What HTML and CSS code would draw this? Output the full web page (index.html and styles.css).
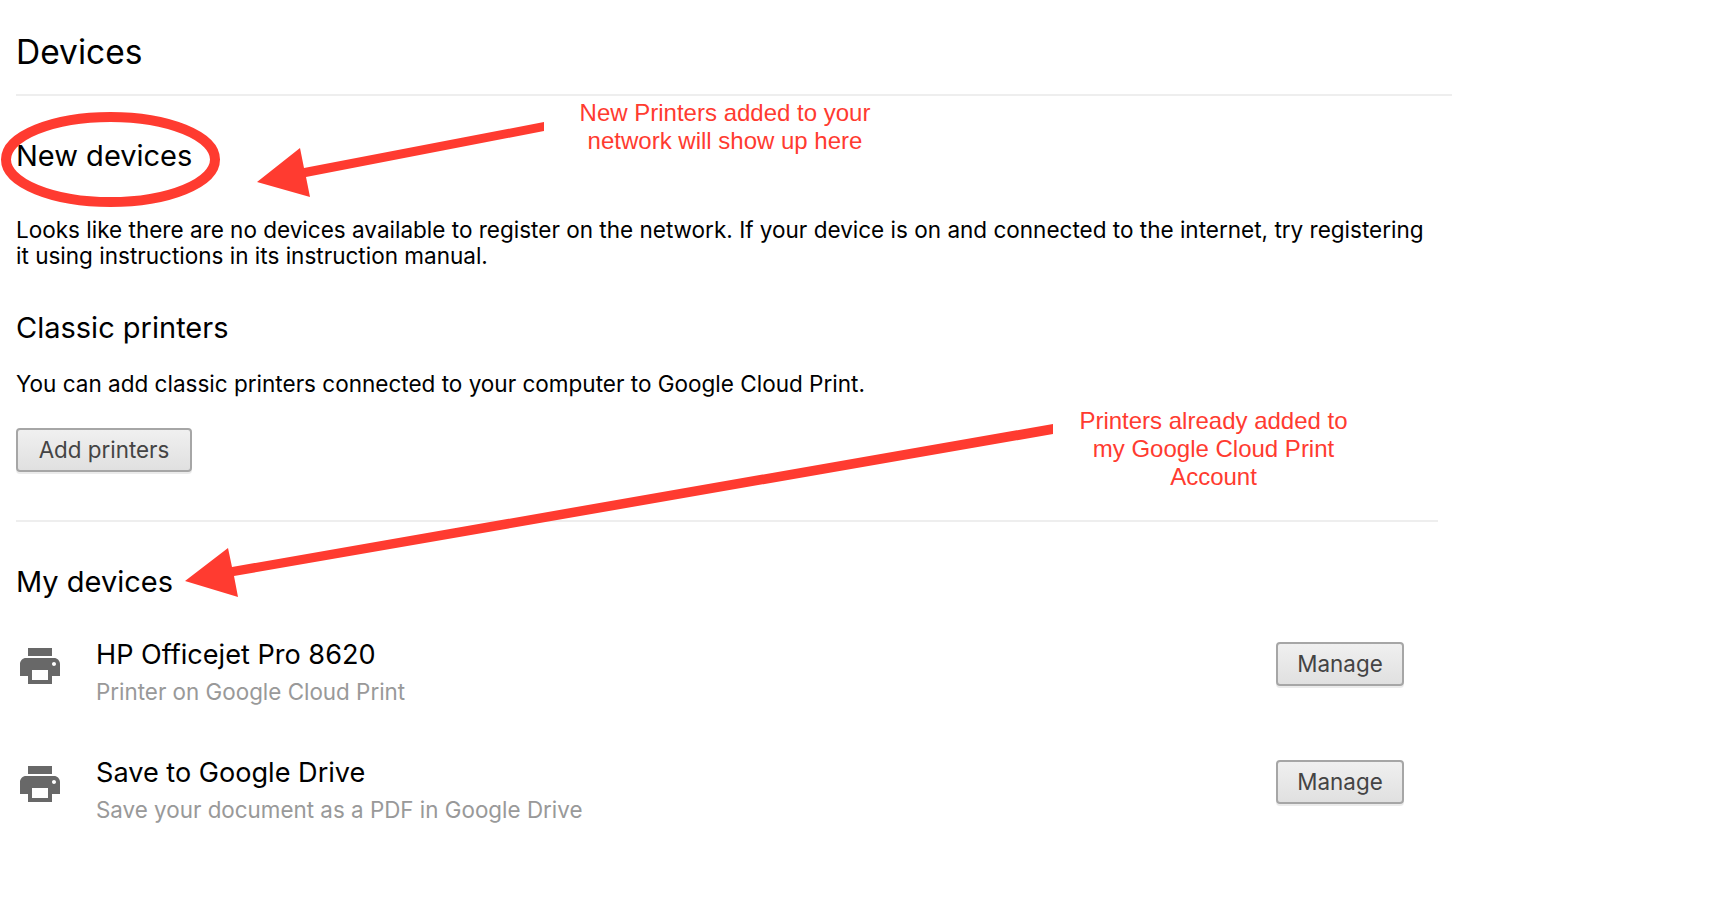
FILE: index.html
```html
<!DOCTYPE html>
<html lang="en">
<head>
<meta charset="utf-8">
<title>Devices</title>
<link rel="stylesheet" href="styles.css">
</head>
<body>
<main class="page">
  <h1 class="title">Devices</h1>
  <hr class="rule rule-top">
  <h2 class="heading heading-new">New devices</h2>
  <p class="body-text body-new">Looks like there are no devices available to register on the network. If your device is on and connected to the internet, try registering<br>it using instructions in its instruction manual.</p>
  <h2 class="heading heading-classic">Classic printers</h2>
  <p class="body-text body-classic">You can add classic printers connected to your computer to Google Cloud Print.</p>
  <button class="btn btn-add" type="button">Add printers</button>
  <hr class="rule rule-mid">
  <h2 class="heading heading-my">My devices</h2>
  <section class="devices">
    <div class="device">
      <svg class="printer" viewBox="0 0 24 24" aria-hidden="true"><path d="M19 8H5c-1.66 0-3 1.34-3 3v6h4v4h12v-4h4v-6c0-1.66-1.34-3-3-3zm-3 11H8v-5h8v5zm3-7c-.55 0-1-.45-1-1s.45-1 1-1 1 .45 1 1-.45 1-1 1zm-1-9H6v4h12V3z"/></svg>
      <div class="device-info">
        <div class="device-name">HP Officejet Pro 8620</div>
        <div class="device-sub">Printer on Google Cloud Print</div>
      </div>
      <button class="btn btn-manage" type="button">Manage</button>
    </div>
    <div class="device">
      <svg class="printer" viewBox="0 0 24 24" aria-hidden="true"><path d="M19 8H5c-1.66 0-3 1.34-3 3v6h4v4h12v-4h4v-6c0-1.66-1.34-3-3-3zm-3 11H8v-5h8v5zm3-7c-.55 0-1-.45-1-1s.45-1 1-1 1 .45 1 1-.45 1-1 1zm-1-9H6v4h12V3z"/></svg>
      <div class="device-info">
        <div class="device-name">Save to Google Drive</div>
        <div class="device-sub">Save your document as a PDF in Google Drive</div>
      </div>
      <button class="btn btn-manage" type="button">Manage</button>
    </div>
  </section>
</main>
<svg class="markup" viewBox="0 0 1714 918" aria-hidden="true">
  <ellipse class="ring" cx="110.5" cy="159.5" rx="104.5" ry="42.5"/>
  <polygon class="arrow" points="544,122 544,131 306,177 310,197 257,182 300,148 304,168"/>
  <polygon class="arrow" points="1053,424 1053,434 234,576 238,597 185,581 228,548 232,567"/>
</svg>
<div class="note note-new">New Printers added to your<br>network will show up here</div>
<div class="note note-my">Printers already added to<br>my Google Cloud Print<br>Account</div>
</body>
</html>
```

FILE: styles.css
```css
html, body {
  margin: 0;
  padding: 0;
  background: #fff;
}
body {
  position: relative;
  width: 1714px;
  height: 918px;
  overflow: hidden;
  font-family: Inter, "Liberation Sans", sans-serif;
  color: #000;
}
.page {
  padding: 32px 0 0 16px;
}
.title {
  margin: 0 0 22px;
  font-size: 33.5px;
  line-height: 40px;
  font-weight: 400;
}
.rule {
  margin: 0;
  height: 2px;
  border: 0;
  background: #eee;
}
.rule-top { width: 1436px; }
.rule-mid { width: 1422px; margin-top: 48px; }
.heading {
  margin: 0;
  font-size: 29px;
  line-height: 36px;
  font-weight: 400;
}
.heading-new { margin-top: 42px; }
.heading-classic { margin-top: 41px; }
.heading-my { margin-top: 42px; }
.body-text {
  margin: 0;
  font-size: 22.53px;
  line-height: 26px;
}
.body-new { margin-top: 43px; }
.body-classic { margin-top: 25px; }
.btn {
  display: block;
  box-sizing: border-box;
  height: 44px;
  padding: 0 0 2px;
  border: 2px solid #a6a6a6;
  border-radius: 4px;
  background: linear-gradient(#f0f0f0, #e0e0e0);
  box-shadow: 0 2px 0 rgba(0, 0, 0, .08);
  font-family: inherit;
  font-size: 22.4px;
  color: #444;
}
.btn-add {
  width: 176px;
  margin-top: 31px;
}
.btn-manage {
  width: 128px;
  margin: 4px 0 0 auto;
}
.devices {
  margin-top: 38px;
  width: 1388px;
}
.device {
  display: flex;
  align-items: flex-start;
  height: 118px;
}
.printer {
  width: 48px;
  height: 48px;
  margin: 4px 1px 0 0;
  fill: #686868;
  flex: none;
}
.device-info {
  margin-left: 31px;
}
.device-name {
  margin-top: 1px;
  font-size: 27.1px;
  line-height: 32px;
}
.device-sub {
  margin-top: 8px;
  font-size: 22.4px;
  line-height: 26px;
  color: #999;
}
.markup {
  position: absolute;
  left: 0;
  top: 0;
  width: 1714px;
  height: 918px;
  pointer-events: none;
}
.ring {
  fill: none;
  stroke: #ff3b30;
  stroke-width: 10;
}
.arrow {
  fill: #ff3b30;
}
.note {
  position: absolute;
  font-family: "Liberation Sans", Arial, sans-serif;
  font-size: 24px;
  line-height: 28px;
  text-align: center;
  color: #ff3b30;
  white-space: nowrap;
  transform: translateX(-50%);
}
.note-new { left: 725px; top: 99px; }
.note-my { left: 1213.5px; top: 407px; }
```
